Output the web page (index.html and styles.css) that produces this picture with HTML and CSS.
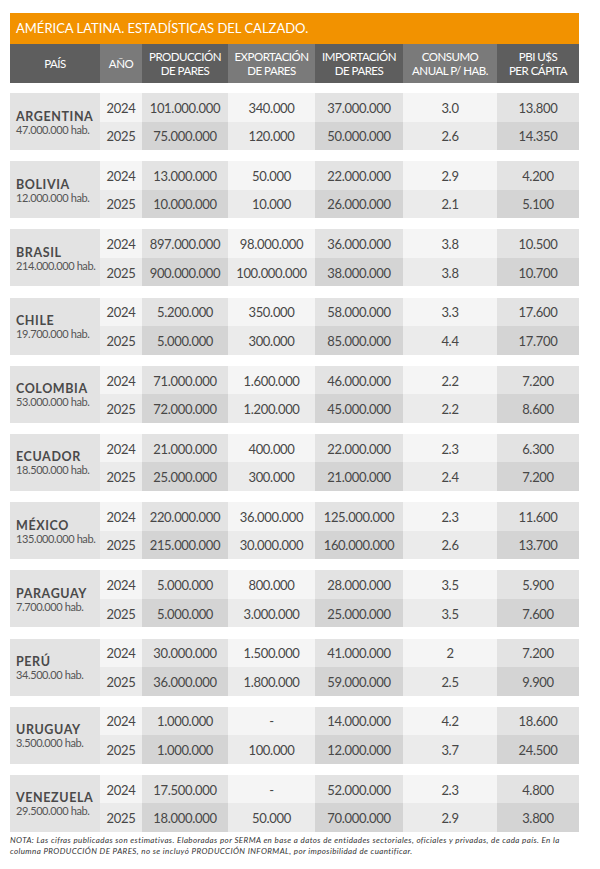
FILE: index.html
```html
<!DOCTYPE html>
<html lang="es">
<head>
<meta charset="utf-8">
<title>América Latina. Estadísticas del calzado.</title>
<link rel="stylesheet" href="styles.css">
</head>
<body>
<div class="sheet">
  <div class="title">AMÉRICA LATINA. ESTADÍSTICAS DEL CALZADO.</div>
  <div class="thead">
    <div class="th dark">PAÍS</div>
    <div class="th light">AÑO</div>
    <div class="th dark">PRODUCCIÓN<br>DE PARES</div>
    <div class="th light">EXPORTACIÓN<br>DE PARES</div>
    <div class="th dark">IMPORTACIÓN<br>DE PARES</div>
    <div class="th light">CONSUMO<br>ANUAL P/ HAB.</div>
    <div class="th dark">PBI U$S<br>PER CÁPITA</div>
  </div>
  <div class="tbody">
    <div class="block">
      <div class="pais"><span class="name">ARGENTINA</span><span class="pop">47.000.000 hab.</span></div>
      <div class="c l1">2024</div><div class="c d1">101.000.000</div><div class="c l1">340.000</div><div class="c d1">37.000.000</div><div class="c l1">3.0</div><div class="c d1">13.800</div>
      <div class="c l2">2025</div><div class="c d2">75.000.000</div><div class="c l2">120.000</div><div class="c d2">50.000.000</div><div class="c l2">2.6</div><div class="c d2">14.350</div>
    </div>
    <div class="block">
      <div class="pais"><span class="name">BOLIVIA</span><span class="pop">12.000.000 hab.</span></div>
      <div class="c l1">2024</div><div class="c d1">13.000.000</div><div class="c l1">50.000</div><div class="c d1">22.000.000</div><div class="c l1">2.9</div><div class="c d1">4.200</div>
      <div class="c l2">2025</div><div class="c d2">10.000.000</div><div class="c l2">10.000</div><div class="c d2">26.000.000</div><div class="c l2">2.1</div><div class="c d2">5.100</div>
    </div>
    <div class="block">
      <div class="pais"><span class="name">BRASIL</span><span class="pop">214.000.000 hab.</span></div>
      <div class="c l1">2024</div><div class="c d1">897.000.000</div><div class="c l1">98.000.000</div><div class="c d1">36.000.000</div><div class="c l1">3.8</div><div class="c d1">10.500</div>
      <div class="c l2">2025</div><div class="c d2">900.000.000</div><div class="c l2">100.000.000</div><div class="c d2">38.000.000</div><div class="c l2">3.8</div><div class="c d2">10.700</div>
    </div>
    <div class="block">
      <div class="pais"><span class="name">CHILE</span><span class="pop">19.700.000 hab.</span></div>
      <div class="c l1">2024</div><div class="c d1">5.200.000</div><div class="c l1">350.000</div><div class="c d1">58.000.000</div><div class="c l1">3.3</div><div class="c d1">17.600</div>
      <div class="c l2">2025</div><div class="c d2">5.000.000</div><div class="c l2">300.000</div><div class="c d2">85.000.000</div><div class="c l2">4.4</div><div class="c d2">17.700</div>
    </div>
    <div class="block">
      <div class="pais"><span class="name">COLOMBIA</span><span class="pop">53.000.000 hab.</span></div>
      <div class="c l1">2024</div><div class="c d1">71.000.000</div><div class="c l1">1.600.000</div><div class="c d1">46.000.000</div><div class="c l1">2.2</div><div class="c d1">7.200</div>
      <div class="c l2">2025</div><div class="c d2">72.000.000</div><div class="c l2">1.200.000</div><div class="c d2">45.000.000</div><div class="c l2">2.2</div><div class="c d2">8.600</div>
    </div>
    <div class="block">
      <div class="pais"><span class="name">ECUADOR</span><span class="pop">18.500.000 hab.</span></div>
      <div class="c l1">2024</div><div class="c d1">21.000.000</div><div class="c l1">400.000</div><div class="c d1">22.000.000</div><div class="c l1">2.3</div><div class="c d1">6.300</div>
      <div class="c l2">2025</div><div class="c d2">25.000.000</div><div class="c l2">300.000</div><div class="c d2">21.000.000</div><div class="c l2">2.4</div><div class="c d2">7.200</div>
    </div>
    <div class="block">
      <div class="pais"><span class="name">MÉXICO</span><span class="pop">135.000.000 hab.</span></div>
      <div class="c l1">2024</div><div class="c d1">220.000.000</div><div class="c l1">36.000.000</div><div class="c d1">125.000.000</div><div class="c l1">2.3</div><div class="c d1">11.600</div>
      <div class="c l2">2025</div><div class="c d2">215.000.000</div><div class="c l2">30.000.000</div><div class="c d2">160.000.000</div><div class="c l2">2.6</div><div class="c d2">13.700</div>
    </div>
    <div class="block">
      <div class="pais"><span class="name">PARAGUAY</span><span class="pop">7.700.000 hab.</span></div>
      <div class="c l1">2024</div><div class="c d1">5.000.000</div><div class="c l1">800.000</div><div class="c d1">28.000.000</div><div class="c l1">3.5</div><div class="c d1">5.900</div>
      <div class="c l2">2025</div><div class="c d2">5.000.000</div><div class="c l2">3.000.000</div><div class="c d2">25.000.000</div><div class="c l2">3.5</div><div class="c d2">7.600</div>
    </div>
    <div class="block">
      <div class="pais"><span class="name">PERÚ</span><span class="pop">34.500.00 hab.</span></div>
      <div class="c l1">2024</div><div class="c d1">30.000.000</div><div class="c l1">1.500.000</div><div class="c d1">41.000.000</div><div class="c l1">2</div><div class="c d1">7.200</div>
      <div class="c l2">2025</div><div class="c d2">36.000.000</div><div class="c l2">1.800.000</div><div class="c d2">59.000.000</div><div class="c l2">2.5</div><div class="c d2">9.900</div>
    </div>
    <div class="block">
      <div class="pais"><span class="name">URUGUAY</span><span class="pop">3.500.000 hab.</span></div>
      <div class="c l1">2024</div><div class="c d1">1.000.000</div><div class="c l1">-</div><div class="c d1">14.000.000</div><div class="c l1">4.2</div><div class="c d1">18.600</div>
      <div class="c l2">2025</div><div class="c d2">1.000.000</div><div class="c l2">100.000</div><div class="c d2">12.000.000</div><div class="c l2">3.7</div><div class="c d2">24.500</div>
    </div>
    <div class="block">
      <div class="pais"><span class="name">VENEZUELA</span><span class="pop">29.500.000 hab.</span></div>
      <div class="c l1">2024</div><div class="c d1">17.500.000</div><div class="c l1">-</div><div class="c d1">52.000.000</div><div class="c l1">2.3</div><div class="c d1">4.800</div>
      <div class="c l2">2025</div><div class="c d2">18.000.000</div><div class="c l2">50.000</div><div class="c d2">70.000.000</div><div class="c l2">2.9</div><div class="c d2">3.800</div>
    </div>
  </div>
  <p class="note">NOTA: Las cifras publicadas son estimativas. Elaboradas por SERMA en base a datos de entidades sectoriales, oficiales y privadas, de cada país. En la columna PRODUCCIÓN DE PARES, no se incluyó PRODUCCIÓN INFORMAL, por imposibilidad de cuantificar.</p>
</div>
</body>
</html>
```

FILE: styles.css
```css
html, body {
  margin: 0;
  padding: 0;
  background: #ffffff;
}

body {
  font-family: Lato, "Open Sans", "Liberation Sans", sans-serif;
  color: #454545;
}

.sheet {
  width: 569px;
  padding: 13px 0 0 10px;
}

.title {
  height: 31px;
  background: #f29200;
  color: #ffffff;
  font-size: 13px;
  letter-spacing: 0;
  line-height: 31px;
  padding-left: 6px;
}

.thead,
.block {
  display: grid;
  grid-template-columns: 90px 42px 86px 87px 88px 94px 82px;
}

.thead {
  height: 39px;
}

.th {
  display: flex;
  align-items: center;
  justify-content: center;
  text-align: center;
  color: #ffffff;
  font-size: 11.5px;
  line-height: 14px;
  letter-spacing: -0.5px;
}

.th.dark { background: #5e5e5e; }
.th.light { background: #7a7a7a; }

.tbody {
  display: flex;
  flex-direction: column;
  gap: 11.2px;
  margin-top: 10px;
}

.block {
  grid-template-rows: 28.5px 28.5px;
}

.pais {
  grid-row: span 2;
  background: #e3e3e3;
  display: flex;
  flex-direction: column;
  justify-content: center;
  padding-left: 6px;
  padding-top: 2px;
}

.name {
  font-weight: 700;
  font-size: 12.5px;
  letter-spacing: 0.6px;
  line-height: 14px;
  color: #4a4a4a;
}

.pop {
  font-size: 11px;
  letter-spacing: -0.4px;
  line-height: 12px;
  color: #555555;
}

.c {
  display: flex;
  align-items: center;
  justify-content: center;
  font-size: 13px;
  letter-spacing: -0.3px;
  color: #474747;
  padding-top: 1px;
}

.l1 { background: #f5f5f5; }
.l2 { background: #ebebeb; }
.d1 { background: #e3e3e3; }
.d2 { background: #d4d4d4; }

.note {
  margin: 3px 0 0 0;
  font-size: 8px;
  font-style: italic;
  line-height: 11px;
  color: #333333;
  letter-spacing: 0.4px;
  padding-right: 0;
}
```
